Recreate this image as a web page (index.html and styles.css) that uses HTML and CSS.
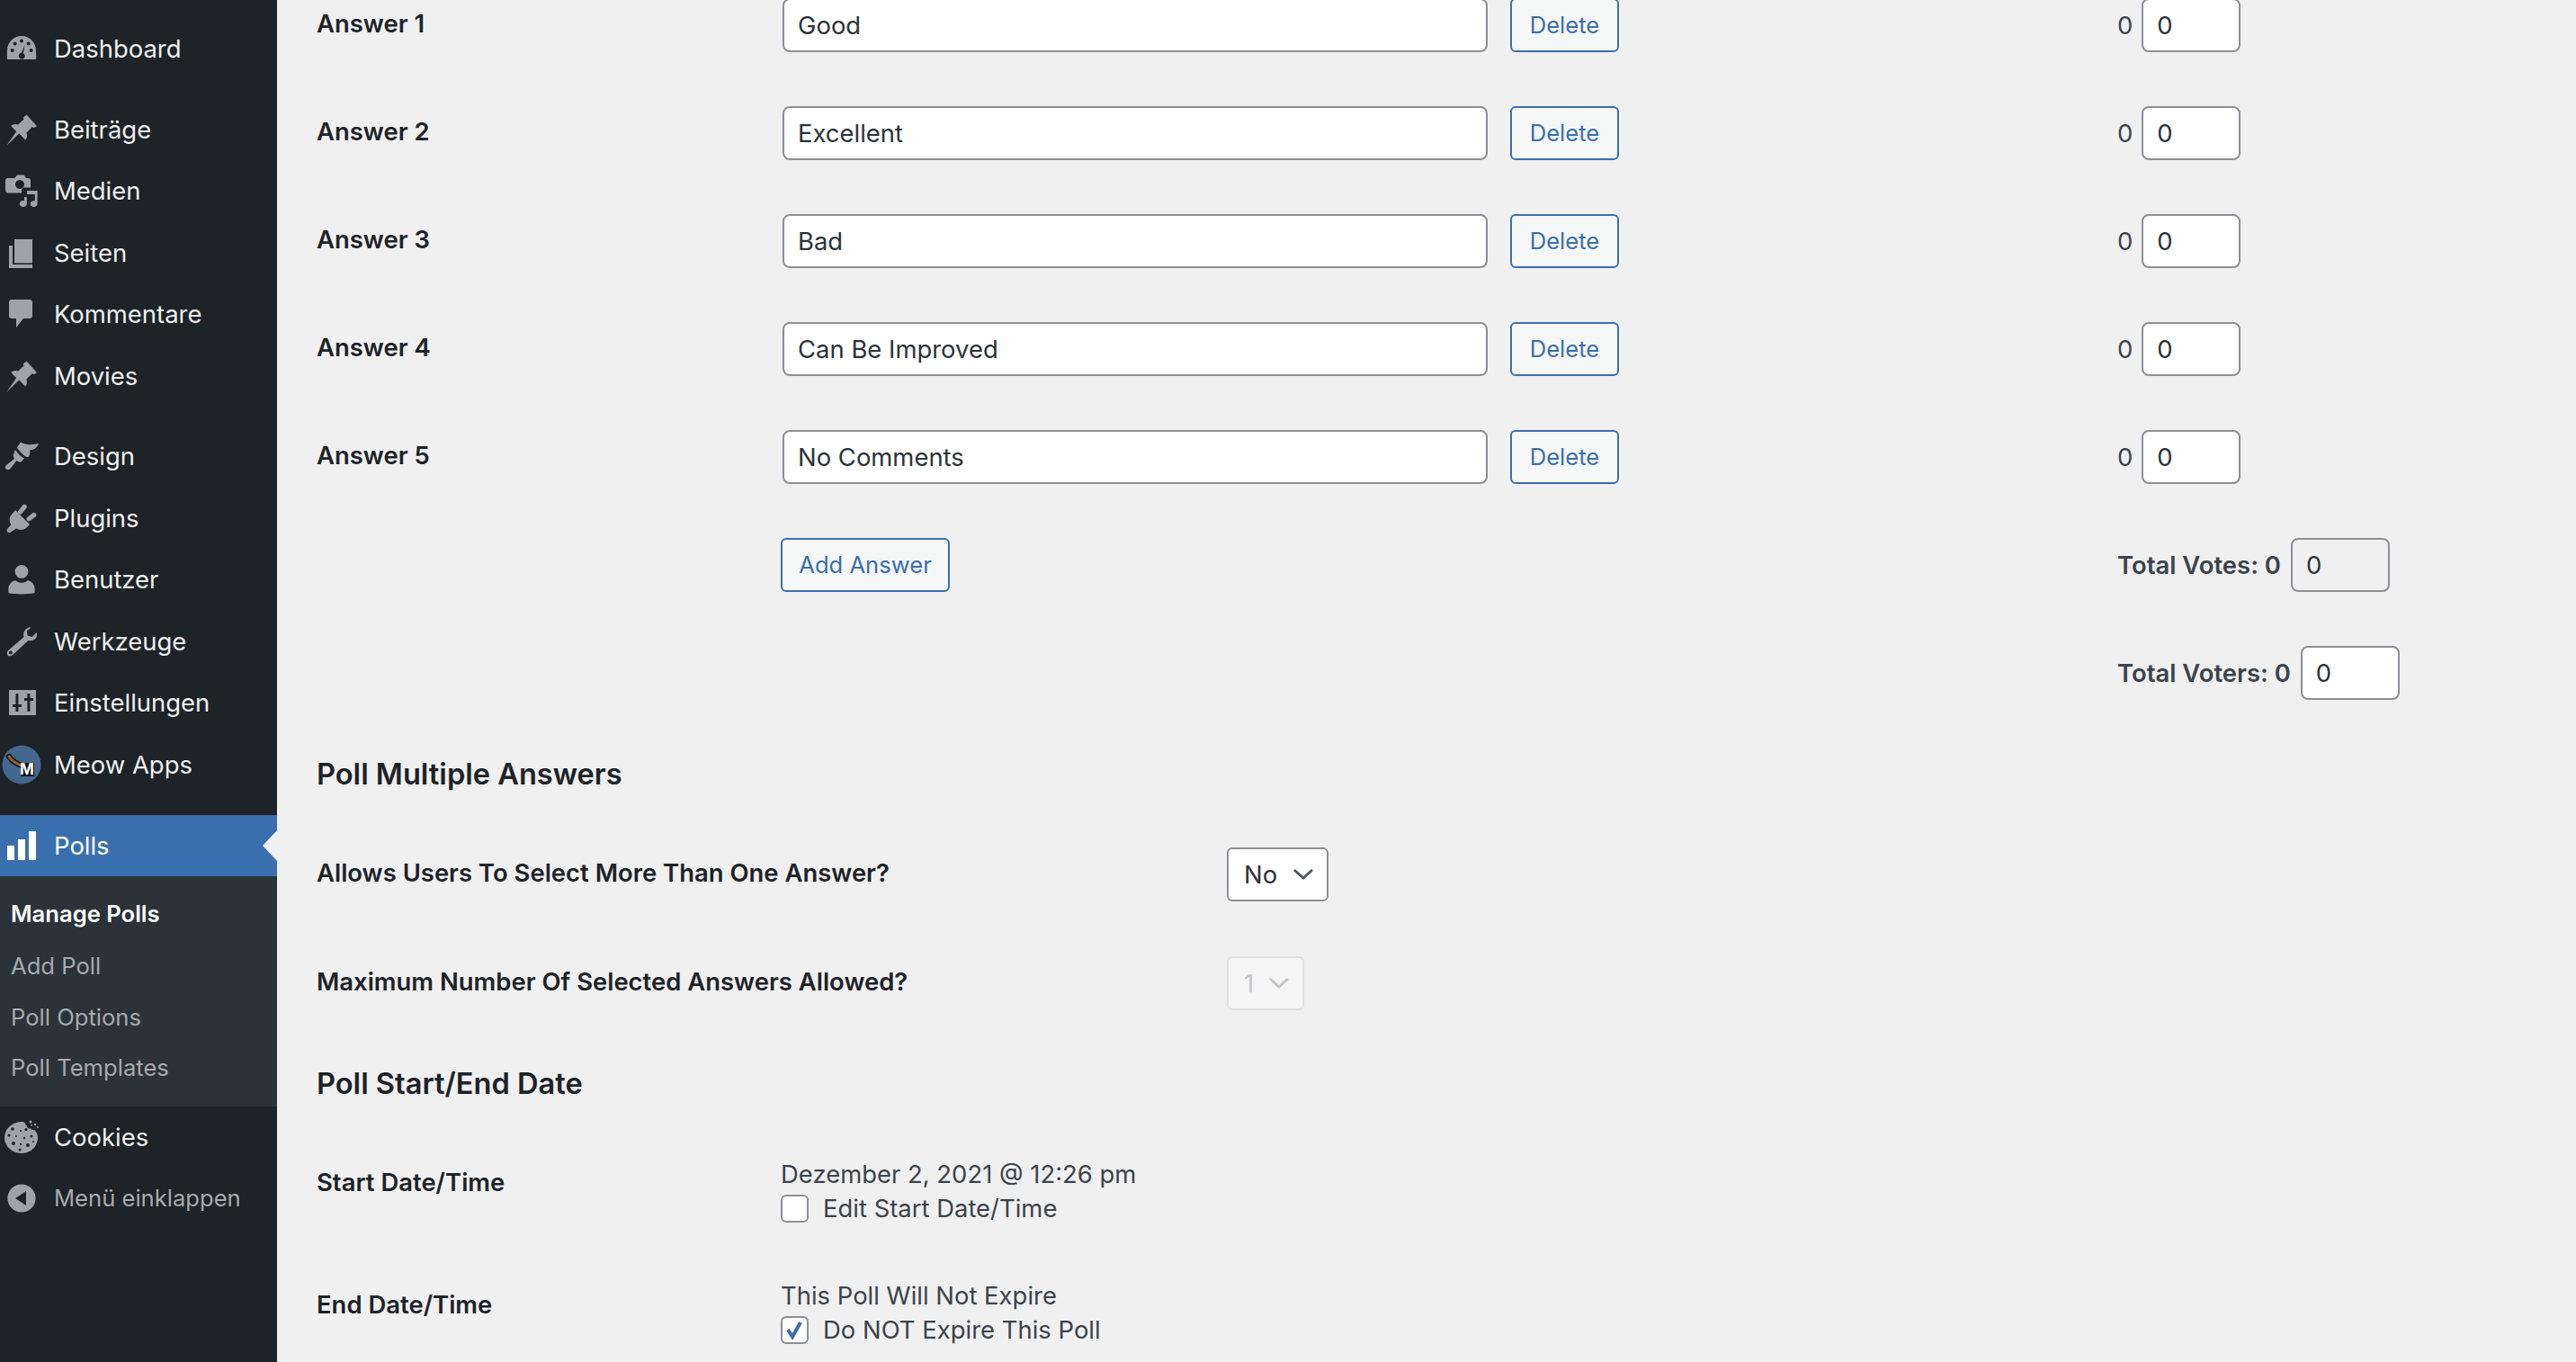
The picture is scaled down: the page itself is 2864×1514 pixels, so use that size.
FILE: index.html
```html
<!DOCTYPE html>
<html lang="de">
<head>
<meta charset="utf-8">
<title>Polls</title>
<link rel="stylesheet" href="styles.css">
</head>
<body>
<div class="app">
<nav class="sidebar">
  <ul class="menu">
    <li class="item first"><svg class="ico" viewBox="0 0 20 20"><path fill-rule="evenodd" d="M2.100 16C1.700 14.800 2 13.200 2 11c0-4.400 3.600-8 8-8s8 3.600 8 8c0 2.200.3 3.800-.1 5z"/><g fill="#1d2327"><circle cx="4.800" cy="11" r="1"/><circle cx="6.300" cy="7.300" r="1"/><circle cx="10" cy="5.800" r="1"/><circle cx="13.800" cy="7.300" r="1"/><circle cx="15.300" cy="11" r="1"/><path d="M11.800 8l-.9 4.600c.9.500 1.200 1.500.8 2.300-.5.900-1.500 1.200-2.400.7-.8-.4-1.100-1.500-.7-2.300.3-.5.800-.8 1.300-.9z"/></g></svg><span>Dashboard</span></li>
    <li class="item gap"><svg class="ico" viewBox="0 0 20 20"><path d="M12.800 1.700l5.700 6.400-1.800 1-.7-.6-3.300 3.200c.6 1.700.3 3.100-.6 4L8.600 12.300 1.700 18.900l5.400-7.800-3-3.100c1-1 2.500-1.300 4-.7l3.200-3.100-.4-1z"/></svg><span>Beiträge</span></li>
    <li class="item"><svg class="ico" viewBox="0 0 20 20"><path fill-rule="evenodd" d="M7.500 1.200h3.800l1.200 1.800h1.200c.7 0 1.300.6 1.300 1.300V8.300h-3.500c-.8 0-1.500.7-1.500 1.500v1.400H2.300C1.500 11.200 1 10.600 1 9.900V4.300C1 3.600 1.600 3 2.300 3h3.900z M9 4a2.500 2.500 0 1 0 .01 0z"/><path d="M13 10h5.800v7.300c0 1-.9 1.700-2 1.700s-2-.7-2-1.700.9-1.700 2-1.700c.2 0 .4 0 .6.100V12h-4.400z"/><path d="M11.500 13.500v2.100c-.2-.100-.4-.100-.6-.100-1.100 0-2 .7-2 1.700s.9 1.800 2 1.800 2-.8 2-1.800V13.500z"/></svg><span>Medien</span></li>
    <li class="item"><svg class="ico" viewBox="0 0 20 20"><path d="M6 2.500h10v13.200H6z"/><path d="M3 6h2v10.500h11v2H3z"/></svg><span>Seiten</span></li>
    <li class="item"><svg class="ico" viewBox="0 0 20 20"><path d="M4.500 2h10c.9 0 1.500.6 1.500 1.500V11c0 .9-.6 1.500-1.500 1.500H11L7 17.500v-5H4.500C3.600 12.500 3 11.900 3 11V3.500C3 2.600 3.600 2 4.500 2z"/></svg><span>Kommentare</span></li>
    <li class="item"><svg class="ico" viewBox="0 0 20 20"><path d="M12.800 1.700l5.700 6.400-1.800 1-.7-.6-3.300 3.200c.6 1.700.3 3.100-.6 4L8.600 12.300 1.700 18.900l5.400-7.800-3-3.100c1-1 2.500-1.300 4-.7l3.200-3.100-.4-1z"/></svg><span>Movies</span></li>
    <li class="item gap"><svg class="ico" viewBox="0 0 20 20"><path d="M9.500 2.200c2.500 1.500 5.500 1.800 10 .8-1 2.700-3 3.700-5 3.700.4.900.3 2.300-.6 3.800-2 .1-4-1.900-6.500-5.300z"/><path d="M6.500 6.500c1.700 2.400 3.100 3.800 5 4.800L10 13c-.6.500-1.300.4-1.900 0l-.8-.5L3.700 17c-.6.800-1.600.9-2.300.3s-.6-1.600.1-2.300l4.500-3.500-.5-1c-.3-.7-.2-1.400.2-1.900z"/></svg><span>Design</span></li>
    <li class="item"><svg class="ico" viewBox="0 0 20 20"><path d="M6.500 5.500l8 8-1.700 1.700c-1.500 1.500-4 1.600-5.700.6L3.500 18 2 17.800 1.800 16.300l2.400-2.700C3 11.800 3 9.500 4.500 8z"/><rect x="9.200" y="2" width="2.600" height="6.200" rx="1.300" transform="rotate(38 10.500 5)"/><rect x="14.200" y="6.200" width="2.600" height="6.200" rx="1.300" transform="rotate(52 15.500 9.300)"/></svg><span>Plugins</span></li>
    <li class="item"><svg class="ico" viewBox="0 0 20 20"><circle cx="10" cy="5.700" r="3.700"/><path d="M2.700 15.200c0-2.300 2.200-4.600 4-4.600 1 .9 2.100 1.300 3.300 1.300s2.300-.4 3.300-1.300c1.800 0 4 2.300 4 4.600v2.300c-1.500.5-4.300.7-7.300.7s-5.800-.2-7.300-.7z"/></svg><span>Benutzer</span></li>
    <li class="item"><svg class="ico" viewBox="0 0 20 20"><path fill-rule="evenodd" d="M14.500 2l-1.500.8c-1.600 1-2.300 2.900-1.700 4.700L2.600 15c-.9.800-1 2-.3 2.700.9.700 2 .6 2.800-.2l8.600-8c1.800.5 3.700-.3 4.600-1.900l.3-2-.5-.3-2.300 2.200-2.500-.8-.4-2.500L15 2.500z M3.900 15.200a1 1 0 1 0 .01 0z"/></svg><span>Werkzeuge</span></li>
    <li class="item"><svg class="ico" viewBox="0 0 20 20"><path fill-rule="evenodd" d="M3 3h15v14H3z M6.700 5v6H5v1.500h1.700V15h1.500v-2.500H10V11H8.200V5z M13.200 7.500H11.500V9h1.700v6h1.500V9h1.800V7.500h-1.800V5h-1.500z"/></svg><span>Einstellungen</span></li>
    <li class="item"><svg class="ico meow" viewBox="0 0 44 44"><circle cx="22" cy="22" r="21.500" fill="#44678f"/><path d="M8 13c4 6 10 9 17 11" fill="none" stroke="#111" stroke-width="6" stroke-linecap="round"/><path d="M8 13c4 6 10 9 17 11" fill="none" stroke="#a0622a" stroke-width="3" stroke-linecap="round"/><rect x="21" y="20" width="15" height="15" fill="#111"/><text x="28" y="33" class="meow-m">M</text></svg><span>Meow Apps</span></li>
    <li class="item gap active"><svg class="ico" viewBox="0 0 20 20"><path d="M2 10h4v8H2zM8 6.500h4V18H8zM14 2h4v16h-4z"/></svg><span>Polls</span></li>
    <li class="submenu">
      <span class="sub current">Manage Polls</span>
      <span class="sub">Add Poll</span>
      <span class="sub">Poll Options</span>
      <span class="sub">Poll Templates</span>
    </li>
    <li class="item"><svg class="ico cookie" viewBox="0 0 40 40"><path d="M20 3c2 0 3 .5 4 1-.5 2 1 3 2 3.500 0 2 2 3.500 4 3 1 1.500 3 2 4.500 1.500C36.500 14.500 38 17 38 20.500 38 30.500 30 38 20 38S1 30.500 1 20.500 10 3 20 3z"/><g fill="#1d2327"><circle cx="10" cy="11" r="1.800"/><circle cx="6" cy="18" r="1.600"/><circle cx="19" cy="13" r="1"/><circle cx="25" cy="11.500" r="1.600"/><circle cx="14" cy="19" r="1"/><circle cx="23" cy="21" r="1.200"/><circle cx="31" cy="19" r="1.500"/><circle cx="11" cy="27" r="2"/><circle cx="19" cy="28" r="1.200"/><circle cx="27" cy="29" r="2"/><circle cx="33" cy="25" r="1"/><circle cx="18" cy="34" r="1.500"/></g><g><circle cx="30" cy="3" r="1.500"/><circle cx="35" cy="6" r="1.200"/><circle cx="38" cy="9" r="1"/><circle cx="31" cy="7" r=".9"/></g></svg><span>Cookies</span></li>
    <li class="item collapse"><svg class="ico" viewBox="0 0 20 20"><path fill-rule="evenodd" d="M10 2.200a7.800 7.800 0 1 1 0 15.600 7.800 7.800 0 0 1 0-15.600z M12.500 6l-6 4 6 4z"/></svg><span>Menü einklappen</span></li>
  </ul>
</nav>
<main class="content">
  <div class="row"><strong class="lbl">Answer 1</strong><div class="ans"><input class="field wide" value="Good"><button class="btn">Delete</button></div><div class="votes"><span>0</span><input class="field small" value="0"></div></div>
  <div class="row"><strong class="lbl">Answer 2</strong><div class="ans"><input class="field wide" value="Excellent"><button class="btn">Delete</button></div><div class="votes"><span>0</span><input class="field small" value="0"></div></div>
  <div class="row"><strong class="lbl">Answer 3</strong><div class="ans"><input class="field wide" value="Bad"><button class="btn">Delete</button></div><div class="votes"><span>0</span><input class="field small" value="0"></div></div>
  <div class="row"><strong class="lbl">Answer 4</strong><div class="ans"><input class="field wide" value="Can Be Improved"><button class="btn">Delete</button></div><div class="votes"><span>0</span><input class="field small" value="0"></div></div>
  <div class="row"><strong class="lbl">Answer 5</strong><div class="ans"><input class="field wide" value="No Comments"><button class="btn">Delete</button></div><div class="votes"><span>0</span><input class="field small" value="0"></div></div>
  <div class="row"><span></span><div class="ans"><button class="btn add">Add Answer</button></div><div class="votes total"><span>Total Votes: 0</span><input class="field small readonly" value="0" readonly></div></div>
  <div class="row voters"><span></span><span></span><div class="votes total"><span>Total Voters: 0</span><input class="field small" value="0"></div></div>
  <h3 class="heading">Poll Multiple Answers</h3>
  <div class="opt"><strong class="lbl">Allows Users To Select More Than One Answer?</strong><select class="sel yes"><option>No</option></select></div>
  <div class="opt"><strong class="lbl">Maximum Number Of Selected Answers Allowed?</strong><select class="sel off" disabled><option>1</option></select></div>
  <h3 class="heading">Poll Start/End Date</h3>
  <div class="date"><strong class="lbl">Start Date/Time</strong><div class="when"><span>Dezember 2, 2021 @ 12:26 pm</span><label class="check"><input type="checkbox"><span>Edit Start Date/Time</span></label></div></div>
  <div class="date"><strong class="lbl lbl-end">End Date/Time</strong><div class="when"><span>This Poll Will Not Expire</span><label class="check"><input type="checkbox" checked><span>Do NOT Expire This Poll</span></label></div></div>
</main>
</div>
</body>
</html>
```
FILE: styles.css
```css
* { box-sizing: border-box; }
html, body { margin: 0; height: 100%; overflow: hidden; }
body { background: #f0f0f1; color: #3c434a; font: 27.45px/38px Inter, "Liberation Sans", sans-serif; }
.app { display: flex; height: 1514px; }
.sidebar { width: 308px; flex: none; background: #1d2327; }
.menu { list-style: none; margin: 0; padding: 20px 0 0; }
.item { position: relative; display: flex; align-items: center; gap: 16px; height: 68.500px; padding-left: 4px; color: #f0f0f1; }
.item.gap { margin-top: 21px; }
.ico { width: 40px; height: 40px; flex: none; fill: #9ea3a8; }
.meow { width: 44px; height: 44px; margin: 0 -2px; }
.meow-m { font: 700 17px Inter, sans-serif; fill: #fff; text-anchor: middle; }
.cookie { width: 40px; height: 40px; }
.item.active { background: #3a6fad; color: #fff; height: 68px; margin-top: 21.500px; }
.active .ico { fill: #fff; }
.active::after { content: ""; position: absolute; right: 0; top: 17px; border: 17px solid transparent; border-right: 16px solid #f0f0f1; border-left: 0; }
.submenu { display: flex; flex-direction: column; background: #2c3338; padding: 14.500px 0 14px 12px; font-size: 25.600px; color: #a7aaad; }
.sub { height: 56.500px; line-height: 56.500px; }
.current { color: #fff; font-weight: 600; margin-bottom: 1.500px; }
.collapse { color: #a7aaad; font-size: 25.600px; }
.content { flex: 1; padding: 0 0 0 44px; margin-top: -2px; min-width: 0; }
.row { display: grid; grid-template-columns: 518px 1484px auto; height: 120px; align-items: start; }
.voters { height: 122px; }
.lbl { display: block; font-weight: 600; color: #1d2327; padding-top: 9px; }
.lbl-end { padding-top: 10px; }
.ans { display: flex; gap: 25px; }
.field { font: inherit; color: #2c3338; background: #fff; border: 2px solid #8c8f94; border-radius: 8px; height: 60px; padding: 0 15px; margin: 0; outline: 0; }
.wide { width: 784px; }
.small { width: 110px; }
.readonly { background: #f0f0f1; }
.votes { display: flex; align-items: center; gap: 10px; height: 60px; }
.total { gap: 11px; font-weight: 600; color: #3c434a; white-space: nowrap; }
.total .field { font-weight: 400; }
.btn { font: inherit; font-size: 25.600px; color: #3a6fad; background: #f6f7f7; border: 2px solid #3a6fad; border-radius: 6px; height: 60px; width: 121px; padding: 0; margin: 0; }
.add { width: 188px; margin-left: -2px; }
.heading { margin: 0; font-size: 32.600px; line-height: 40px; font-weight: 600; color: #1d2327; height: 102px; }
.opt { display: grid; grid-template-columns: 1012px auto; height: 121px; align-items: start; justify-items: start; }
.sel { appearance: none; font: inherit; color: #2c3338; background: #fff url("data:image/svg+xml,%3Csvg xmlns='http://www.w3.org/2000/svg' width='24' height='14'%3E%3Cpath d='M2 2l10 9 10-9' fill='none' stroke='%2350575e' stroke-width='3'/%3E%3C/svg%3E") no-repeat right 14px center; border: 2px solid #8c8f94; border-radius: 6px; height: 60px; padding: 0 50px 0 17px; margin: 0; }
.yes { width: 113px; }
.off { width: 86px; color: #c3c4c7; background-color: #f5f5f6; border-color: #dfe0e1; opacity: 1; background-image: url("data:image/svg+xml,%3Csvg xmlns='http://www.w3.org/2000/svg' width='24' height='14'%3E%3Cpath d='M2 2l10 9 10-9' fill='none' stroke='%23c3c4c7' stroke-width='3'/%3E%3C/svg%3E"); }
.date { display: grid; grid-template-columns: 516px auto; height: 135px; align-items: start; }
.when { display: flex; flex-direction: column; }
.check { display: flex; align-items: center; gap: 16px; }
.check input { appearance: none; width: 31px; height: 31px; margin: 0; border: 2px solid #8c8f94; border-radius: 6px; background: #fff no-repeat center; flex: none; }
.check input:checked { background-image: url("data:image/svg+xml,%3Csvg xmlns='http://www.w3.org/2000/svg' width='26' height='26'%3E%3Cpath d='M5 13l5 8 9-16' fill='none' stroke='%233a6fad' stroke-width='4'/%3E%3C/svg%3E"); }
```
